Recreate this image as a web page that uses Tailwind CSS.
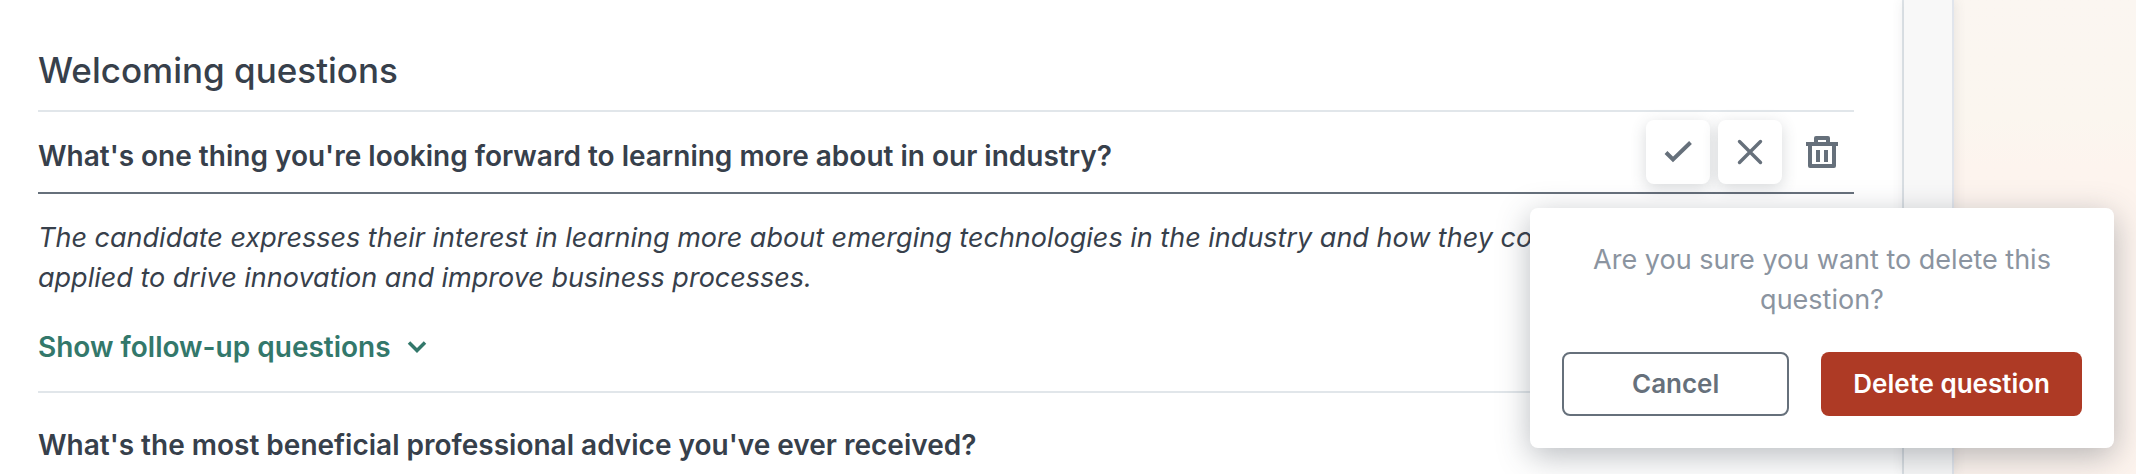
<!DOCTYPE html>
<html lang="en">
<head>
<meta charset="utf-8">
<title>Welcoming questions</title>
<script src="https://cdn.jsdelivr.net/npm/@tailwindcss/browser@4"></script>
</head>
<body class="flex min-h-screen overflow-hidden bg-linear-to-b from-[#fbf6f1] via-[#fbf6ef] via-25% to-[#fdf4ee] to-35% font-['Inter',sans-serif] text-[28px] leading-10 text-[#37404b]">
  <main class="min-w-0 flex-1 border-r-2 border-[#e1e6ea] bg-white pt-[46px] pr-12 pl-[38px]">
    <h1 class="border-b-2 border-[#e1e6ea] pb-4 text-[35px] leading-12 font-medium">Welcoming questions</h1>

    <section class="border-b-2 border-[#e1e6ea] pb-6">
      <div class="flex items-end gap-2 border-b-2 border-[#66707b] py-2">
        <input type="text" aria-label="Question" value="What's one thing you're looking forward to learning more about in our industry?" class="h-14 min-w-0 flex-1 bg-transparent font-semibold outline-none">
        <button type="button" aria-label="Save" class="flex size-16 items-center justify-center rounded-lg bg-white text-[#66707b] shadow-[0_4px_16px_rgba(55,64,75,0.2)]">
          <svg class="size-8" viewBox="0 0 32 32" fill="none" stroke="currentColor" stroke-width="4"><path d="M4 16.500 L11 23.500 L28.500 6.500" stroke-linejoin="miter"/></svg>
        </button>
        <button type="button" aria-label="Discard" class="flex size-16 items-center justify-center rounded-lg bg-white text-[#66707b] shadow-[0_4px_16px_rgba(55,64,75,0.2)]">
          <svg class="size-8" viewBox="0 0 32 32" fill="none" stroke="currentColor" stroke-width="3.4" stroke-linecap="round"><path d="M5.500 5.500 L26.500 26.500 M26.500 5.500 L5.500 26.500"/></svg>
        </button>
        <div class="relative">
          <button type="button" aria-label="Delete" class="flex size-16 items-center justify-center text-[#66707b]">
            <svg class="size-8" viewBox="0 0 32 32" fill="currentColor" fill-rule="evenodd"><path d="M8 6V2a2 2 0 0 1 2-2h12a2 2 0 0 1 2 2v4h8v4h-2v20a2 2 0 0 1-2 2H4a2 2 0 0 1-2-2V10H0V6zM12 6h8V4h-8zM6 10v18h20V10zM10 14h4v12h-4zM18 14h4v12h-4z"/></svg>
          </button>
          <div role="dialog" aria-label="Delete question" class="absolute top-[88px] left-1/2 z-10 w-[584px] -translate-x-1/2 rounded-lg bg-white p-8 shadow-[0_8px_32px_rgba(55,64,75,0.35)]">
            <p class="text-center text-[27px] leading-10 text-[#8b94a0]">Are you sure you want to delete this question?</p>
            <div class="mt-8 flex gap-8">
              <button type="button" class="h-16 flex-1 rounded-lg border-2 border-[#66707b] text-[26px] font-semibold text-[#66707b]">Cancel</button>
              <button type="button" class="h-16 rounded-lg bg-[#ae3a25] px-8 text-[26px] font-semibold text-white">Delete question</button>
            </div>
          </div>
        </div>
      </div>
      <p class="mt-6 text-[27px] leading-10 italic">The candidate expresses their interest in learning more about emerging technologies in the industry and how they could potentially be applied to drive innovation and improve business processes.</p>
      <button type="button" class="mt-[29px] flex items-center gap-4 font-semibold text-[#33786b]">
        Show follow-up questions
        <svg class="w-5" viewBox="0 0 20 14" fill="none" stroke="currentColor" stroke-width="3.5"><path d="M2 2.500 L10 10.500 L18 2.500"/></svg>
      </button>
    </section>

    <h2 class="pt-8 font-semibold">What's the most beneficial professional advice you've ever received?</h2>
  </main>
  <aside class="w-[50px] border-r-2 border-[#e1e5ec] bg-[#f8f8f8] shadow-[0_0_12px_rgba(55,64,75,0.12)]"></aside>
  <div class="w-[182px]"></div>
</body>
</html>
